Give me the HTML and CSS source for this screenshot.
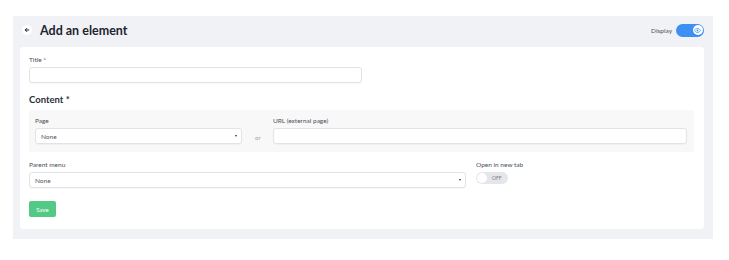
FILE: index.html
```html
<!DOCTYPE html>
<html>
<head>
<meta charset="utf-8">
<link rel="stylesheet" href="styles.css">
</head>
<body>
<div class="panel">
  <div class="header">
    <div class="head-left">
      <span class="back">
        <svg width="10" height="10" viewBox="0 0 10 10"><circle cx="5" cy="5" r="5" fill="#fff"/><path d="M6.8 5H3.3M4.8 3.4L3.2 5l1.6 1.6" stroke="#1f2430" stroke-width="1" fill="none" stroke-linecap="round" stroke-linejoin="round"/></svg>
      </span>
      <h1 class="title">Add an element</h1>
    </div>
    <div class="head-right">
      <span class="display-label">Display</span>
      <span class="switch-on">
        <span class="knob-on">
          <svg width="7" height="5" viewBox="0 0 14 10"><path d="M1 5c1.8-3 3.8-4 6-4s4.2 1 6 4c-1.8 3-3.8 4-6 4s-4.2-1-6-4z" fill="none" stroke="#3d8ff2" stroke-width="1.6"/><circle cx="7" cy="5" r="1.8" fill="#3d8ff2"/></svg>
        </span>
      </span>
    </div>
  </div>
  <div class="card">
    <label class="lbl">Title *</label>
    <div class="input title-input"></div>
    <h2 class="section">Content *</h2>
    <div class="content-box">
      <div class="field page-field">
        <label class="lbl">Page</label>
        <div class="input select"><span>None</span><span class="caret"></span></div>
      </div>
      <div class="or">or</div>
      <div class="field url-field">
        <label class="lbl">URL (external page)</label>
        <div class="input"></div>
      </div>
    </div>
    <div class="row">
      <div class="field parent-field">
        <label class="lbl">Parent menu</label>
        <div class="input select"><span>None</span><span class="caret"></span></div>
      </div>
      <div class="field tab-field">
        <label class="lbl">Open in new tab</label>
        <span class="switch-off"><span class="knob-off"></span><span class="off">OFF</span></span>
      </div>
    </div>
    <button class="save">Save</button>
  </div>
</div>
</body>
</html>
```
FILE: styles.css
```css
* { box-sizing: border-box; }
body {
  margin: 0;
  background: #fff;
  font-family: "Lato", "Noto Sans", sans-serif;
  color: #2a2f3a;
}
.panel {
  margin: 16px 0 0 13px;
  width: 700px;
  height: 223px;
  background: #f1f2f5;
  padding: 0 9px 10px 7px;
}
.header {
  height: 31px;
  display: flex;
  align-items: center;
  justify-content: space-between;
  padding: 0 0 3px 2px;
}
.head-left { display: flex; align-items: center; gap: 8px; }
.back { display: flex; width: 10px; height: 10px; }
.title {
  margin: 0;
  font-size: 12.5px;
  font-weight: 700;
  color: #1f2430;
}
.head-right { display: flex; align-items: center; gap: 4px; }
.display-label { font-size: 6.5px; color: #4a4f5a; }
.switch-on {
  width: 28px;
  height: 13px;
  border-radius: 7px;
  background: #3d8ff2;
  display: flex;
  justify-content: flex-end;
  align-items: center;
  padding: 1.5px;
}
.knob-on {
  width: 10px;
  height: 10px;
  border-radius: 50%;
  background: #fff;
  display: flex;
  align-items: center;
  justify-content: center;
}
.card {
  background: #fff;
  height: 182px;
  border-radius: 3px;
  padding: 8px 9px 0 9px;
}
.lbl {
  display: block;
  font-size: 6.5px;
  line-height: 9px;
  color: #4b505a;
  margin-bottom: 3px;
}
.input {
  height: 16px;
  border: 1px solid #e1e3e7;
  border-radius: 3px;
  background: #fff;
  box-shadow: 0 1px 1px rgba(0,0,0,0.03);
}
.title-input { width: 333px; }
.section {
  margin: 11px 0 4px 0;
  font-size: 9.5px;
  font-weight: 700;
  color: #2a2f3a;
  line-height: 12px;
}
.content-box {
  width: 665px;
  height: 42px;
  background: #f8f8f9;
  border-radius: 2px;
  display: flex;
  align-items: flex-start;
  padding: 6px 7px 0 6px;
}
.page-field { width: 207px; }
.or {
  width: 31px;
  padding-top: 18px;
  padding-left: 13px;
  font-size: 6px;
  color: #9aa0a8;
}
.url-field { flex: 1; }
.select {
  display: flex;
  align-items: center;
  justify-content: space-between;
  padding: 0 4px 0 5px;
  font-size: 6.5px;
  color: #555a64;
}
.caret {
  width: 0;
  height: 0;
  border-left: 1.5px solid transparent;
  border-right: 1.5px solid transparent;
  border-top: 2px solid #333;
}
.row {
  display: flex;
  margin-top: 8px;
  gap: 10px;
}
.parent-field { width: 437px; }
.switch-off {
  width: 32px;
  height: 12px;
  border-radius: 6px;
  background: #e4e6ea;
  display: flex;
  align-items: center;
  padding: 1px;
}
.knob-off {
  width: 10px;
  height: 10px;
  border-radius: 50%;
  background: #fff;
}
.off {
  font-size: 5px;
  color: #7a7f88;
  margin-left: 5px;
}
.save {
  margin-top: 13px;
  width: 27px;
  height: 16px;
  border: none;
  border-radius: 2px;
  background: #52c985;
  color: #fff;
  font-family: inherit;
  font-size: 6px;
  padding: 0;
}
```
